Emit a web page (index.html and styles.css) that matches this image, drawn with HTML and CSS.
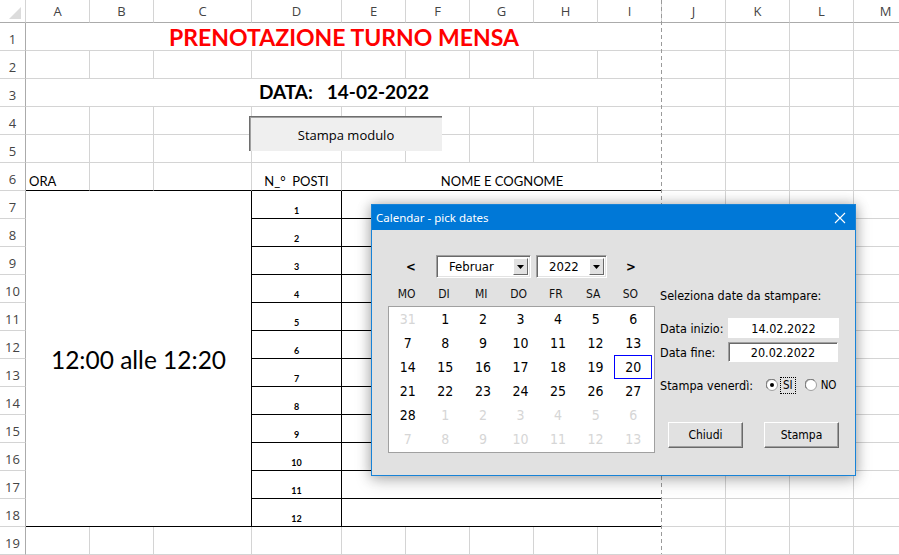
FILE: index.html
```html
<!DOCTYPE html>
<html lang="it">
<head>
<meta charset="utf-8">
<title>Prenotazione turno mensa</title>
<link rel="stylesheet" href="styles.css">
</head>
<body>
<div class="sheet">
  <div class="corner"><svg width="12" height="12" viewBox="0 0 12 12"><polygon points="12,0 12,12 0,12" fill="#dcdcdc"/></svg></div>
  <div class="ch">A</div><div class="ch">B</div><div class="ch">C</div><div class="ch">D</div><div class="ch">E</div><div class="ch">F</div><div class="ch">G</div><div class="ch">H</div><div class="ch">I</div><div class="ch">J</div><div class="ch">K</div><div class="ch">L</div><div class="ch">M</div>

  <div class="rh">1</div><div class="cell title">PRENOTAZIONE TURNO MENSA</div>
  <div class="rh">2</div>
  <div class="rh">3</div><div class="cell date">DATA:   14-02-2022</div>
  <div class="rh">4</div>
  <div class="rh">5</div>
  <div class="rh">6</div><div class="cell hd col-a">ORA</div><div class="cell hd col-b"></div><div class="cell hd col-c"></div><div class="cell hd col-d">N_°  POSTI</div><div class="cell hd col-e">NOME E COGNOME</div>
  <div class="rh">7</div><div class="cell ora">12:00 alle 12:20</div><div class="cell seat">1</div><div class="cell name"></div>
  <div class="rh">8</div><div class="cell seat">2</div><div class="cell name"></div>
  <div class="rh">9</div><div class="cell seat">3</div><div class="cell name"></div>
  <div class="rh">10</div><div class="cell seat">4</div><div class="cell name"></div>
  <div class="rh">11</div><div class="cell seat">5</div><div class="cell name"></div>
  <div class="rh">12</div><div class="cell seat">6</div><div class="cell name"></div>
  <div class="rh">13</div><div class="cell seat">7</div><div class="cell name"></div>
  <div class="rh">14</div><div class="cell seat">8</div><div class="cell name"></div>
  <div class="rh">15</div><div class="cell seat">9</div><div class="cell name"></div>
  <div class="rh">16</div><div class="cell seat">10</div><div class="cell name"></div>
  <div class="rh">17</div><div class="cell seat">11</div><div class="cell name"></div>
  <div class="rh">18</div><div class="cell seat">12</div><div class="cell name"></div>
  <div class="rh">19</div>

  <div class="pagebreak"></div>
  <div class="sheet-btn">Stampa modulo</div>
</div>

<div class="dialog">
  <div class="titlebar">
    <span class="title-text">Calendar - pick dates</span>
    <span class="close"><svg width="12" height="12" viewBox="0 0 12 12"><path d="M1 1L11 11M11 1L1 11" stroke="#fff" stroke-width="1.1" fill="none"/></svg></span>
  </div>
  <div class="dlg-body">
    <div class="cal">
      <div class="nav">
        <span class="arrow prev">&lt;</span>
        <div class="combo month"><span class="combo-val">Februar</span><span class="drop"><svg width="7" height="4" viewBox="0 0 7 4"><polygon points="0,0 7,0 3.5,4" fill="#000"/></svg></span></div>
        <div class="combo year"><span class="combo-val">2022</span><span class="drop"><svg width="7" height="4" viewBox="0 0 7 4"><polygon points="0,0 7,0 3.5,4" fill="#000"/></svg></span></div>
        <span class="arrow next">&gt;</span>
      </div>
      <div class="dow"><span>MO</span><span>DI</span><span>MI</span><span>DO</span><span>FR</span><span>SA</span><span>SO</span></div>
      <div class="days">
        <span class="off">31</span><span>1</span><span>2</span><span>3</span><span>4</span><span>5</span><span>6</span>
        <span>7</span><span>8</span><span>9</span><span>10</span><span>11</span><span>12</span><span>13</span>
        <span>14</span><span>15</span><span>16</span><span>17</span><span>18</span><span>19</span><span class="sel">20</span>
        <span>21</span><span>22</span><span>23</span><span>24</span><span>25</span><span>26</span><span>27</span>
        <span>28</span><span class="off">1</span><span class="off">2</span><span class="off">3</span><span class="off">4</span><span class="off">5</span><span class="off">6</span>
        <span class="off">7</span><span class="off">8</span><span class="off">9</span><span class="off">10</span><span class="off">11</span><span class="off">12</span><span class="off">13</span>
      </div>
    </div>
    <div class="form">
      <div class="lead">Seleziona date da stampare:</div>
      <div class="field first"><span class="lbl">Data inizio:</span><span class="inp flat">14.02.2022</span></div>
      <div class="field"><span class="lbl">Data fine:</span><span class="inp sunken">20.02.2022</span></div>
      <div class="radio-row">
        <span class="rlbl">Stampa venerdì:</span>
        <svg class="radio" width="12" height="12" viewBox="0 0 12 12"><circle cx="6" cy="6" r="5.5" fill="#fff" stroke="#a0a0a0"/><path d="M1.6 9.4A5.5 5.5 0 0 1 9.4 1.6" stroke="#696969" fill="none"/><circle cx="6" cy="6" r="2" fill="#000"/></svg>
        <span class="opt focus">SI</span>
        <svg class="radio r2" width="12" height="12" viewBox="0 0 12 12"><circle cx="6" cy="6" r="5.5" fill="#fff" stroke="#a0a0a0"/><path d="M1.6 9.4A5.5 5.5 0 0 1 9.4 1.6" stroke="#696969" fill="none"/></svg>
        <span class="opt">NO</span>
      </div>
      <div class="buttons"><span class="btn">Chiudi</span><span class="btn">Stampa</span></div>
    </div>
  </div>
</div>
</body>
</html>
```
FILE: styles.css
```css
html, body {
  margin: 0;
  padding: 0;
  background: #fff;
}
body {
  position: relative;
  width: 899px;
  height: 555px;
  overflow: hidden;
  font-family: "Lato", "Open Sans", sans-serif;
  color: #000;
}
.sheet {
  position: relative;
  display: grid;
  grid-template-columns: 26px 64px 64px 98px 90px repeat(9, 64px);
  grid-template-rows: 23px repeat(19, 28px);
  width: 918px;
  background-color: #fff;
  background-image:
    repeating-linear-gradient(to bottom, transparent 0 27px, #d4d4d4 27px 28px),
    linear-gradient(#d4d4d4, #d4d4d4),
    linear-gradient(#d4d4d4, #d4d4d4),
    linear-gradient(#d4d4d4, #d4d4d4),
    linear-gradient(#d4d4d4, #d4d4d4),
    linear-gradient(#d4d4d4, #d4d4d4),
    linear-gradient(#d4d4d4, #d4d4d4),
    linear-gradient(#d4d4d4, #d4d4d4),
    linear-gradient(#d4d4d4, #d4d4d4),
    linear-gradient(#d4d4d4, #d4d4d4),
    linear-gradient(#d4d4d4, #d4d4d4),
    linear-gradient(#d4d4d4, #d4d4d4);
  background-size: 100% 100%, 1px 100%, 1px 100%, 1px 100%, 1px 100%, 1px 100%, 1px 100%, 1px 100%, 1px 100%, 1px 100%, 1px 100%, 1px 100%;
  background-position: 0 23px, 89px 0, 153px 0, 251px 0, 341px 0, 405px 0, 469px 0, 533px 0, 597px 0, 725px 0, 789px 0, 853px 0;
  background-repeat: no-repeat;
}
.sheet > div {
  box-sizing: border-box;
}
.corner {
  background: #fff;
  border-right: 1px solid #d4d4d4;
  border-bottom: 1px solid #ababab;
  display: flex;
  justify-content: flex-end;
  align-items: flex-end;
  padding: 0 4px 3px 0;
}
.corner svg { display: block; }
.ch {
  background: #fff;
  border-right: 1px solid #d4d4d4;
  border-bottom: 1px solid #ababab;
  font-family: "Open Sans", "Noto Sans", sans-serif;
  font-size: 13px;
  color: #444;
  display: flex;
  align-items: center;
  justify-content: center;
  line-height: 1;
}
.rh {
  grid-column: 1;
  background: #fff;
  border-right: 1px solid #ababab;
  border-bottom: 1px solid #d4d4d4;
  font-family: "Open Sans", "Noto Sans", sans-serif;
  font-size: 13px;
  color: #444;
  display: flex;
  align-items: flex-end;
  justify-content: center;
  padding-bottom: 3px;
  line-height: 16px;
}
.cell {
  background: #fff;
  display: flex;
  white-space: pre;
}
.title {
  grid-column: 2 / 11;
  border-bottom: 1px solid #d4d4d4;
  align-items: center;
  justify-content: center;
  color: #ff0000;
  font-weight: 700;
  font-size: 23px;
  padding-top: 1px;
}
.date {
  grid-column: 2 / 11;
  border-bottom: 1px solid #d4d4d4;
  align-items: center;
  justify-content: center;
  font-weight: 700;
  font-size: 19px;
  padding-bottom: 2px;
}
.hd {
  border-bottom: 1px solid #000;
  border-right: 1px solid #d4d4d4;
  align-items: flex-end;
  font-size: 13px;
  line-height: 16px;
  padding-bottom: 1px;
}
.col-a { grid-column: 2; padding-left: 3px; }
.col-b { grid-column: 3; }
.col-c { grid-column: 4; }
.col-d { grid-column: 5; justify-content: center; }
.col-e { grid-column: 6 / 11; justify-content: center; border-right: none; }
.ora {
  grid-column: 2 / 5;
  grid-row: span 12;
  border-right: 1px solid #000;
  border-bottom: 1px solid #000;
  align-items: center;
  justify-content: center;
  font-size: 24.5px;
  padding-top: 1px;
}
.seat {
  grid-column: 5;
  border-right: 1px solid #000;
  border-bottom: 1px solid #000;
  align-items: flex-end;
  justify-content: center;
  font-size: 9px;
  font-weight: 700;
  line-height: 10px;
  padding-bottom: 2px;
}
.name {
  grid-column: 6 / 11;
  border-bottom: 1px solid #000;
}
.pagebreak {
  position: absolute;
  left: 661px;
  top: 0;
  width: 1px;
  height: 554px;
  background: repeating-linear-gradient(to bottom, #9a9a9a 0 4px, transparent 4px 7px);
}
.sheet-btn {
  position: absolute;
  left: 249px;
  top: 116px;
  width: 193px;
  height: 35px;
  box-sizing: border-box;
  background: #efefef;
  border-top: 1px solid #6e6e6e;
  border-left: 1px solid #6e6e6e;
  box-shadow: inset 1px 1px 0 #a0a0a0;
  font-family: "Open Sans", "Noto Sans", sans-serif;
  font-size: 13px;
  display: flex;
  align-items: center;
  justify-content: center;
  padding-top: 2px;
}

/* dialog */
.dialog {
  position: absolute;
  left: 371px;
  top: 204px;
  width: 485px;
  height: 272px;
  box-sizing: border-box;
  border: 1px solid #1883d7;
  background: #e1e1e1;
  box-shadow: 0 0 12px rgba(0, 0, 0, 0.28), 0 5px 16px rgba(0, 0, 0, 0.18);
  font-family: "DejaVu Sans Condensed", "DejaVu Sans", sans-serif;
}
.titlebar {
  height: 25px;
  background: #0078d7;
  display: flex;
  align-items: center;
  justify-content: space-between;
  padding-left: 4px;
  color: #fff;
  font-family: "Noto Sans", "Open Sans", sans-serif;
  font-size: 11.5px;
}
.close {
  width: 30px;
  display: flex;
  justify-content: center;
}
.close svg { display: block; }
.dlg-body {
  display: flex;
  padding: 25px 0 0 16px;
}
.cal {
  width: 267px;
}
.nav {
  display: flex;
  align-items: center;
  height: 23px;
}
.arrow {
  font-weight: 700;
  font-size: 13px;
  text-align: center;
}
.prev { width: 46px; }
.next { flex: 1; }
.combo {
  box-sizing: border-box;
  height: 23px;
  display: flex;
  align-items: stretch;
  background: #fff;
  border-top: 1px solid #a0a0a0;
  border-left: 1px solid #a0a0a0;
  border-right: 1px solid #fff;
  border-bottom: 1px solid #fff;
  box-shadow: inset 1px 1px 0 #696969, inset -1px -1px 0 #e3e3e3;
  padding: 2px;
  font-size: 13px;
}
.month { width: 95px; margin-left: 2px; }
.year { width: 71px; margin-left: 5px; }
.combo-val {
  flex: 1;
  display: flex;
  align-items: center;
  padding-left: 10px;
}
.drop {
  width: 15px;
  box-sizing: border-box;
  background: #e1e1e1;
  border-top: 1px solid #fff;
  border-left: 1px solid #fff;
  border-right: 1px solid #696969;
  border-bottom: 1px solid #696969;
  display: flex;
  align-items: center;
  justify-content: center;
}
.drop svg { display: block; }
.dow {
  display: grid;
  grid-template-columns: repeat(7, 37.3px);
  height: 18px;
  margin-top: 7px;
  align-items: center;
  font-size: 12px;
  color: #111;
}
.dow span { text-align: center; }
.days {
  box-sizing: border-box;
  width: 267px;
  margin-top: 3px;
  border: 1px solid #a0a0a0;
  background: #fff;
  padding: 0 2px 1px 0;
  display: grid;
  grid-template-columns: repeat(7, 1fr);
  grid-auto-rows: 24px;
  font-size: 14px;
}
.days span {
  display: flex;
  align-items: center;
  justify-content: center;
  box-sizing: border-box;
}
.days .off { color: #d6d6d6; }
.days .sel { border: 1px solid #0000ff; }
.form {
  margin-left: 5px;
  padding-top: 33px;
  display: flex;
  flex-direction: column;
  font-size: 12.5px;
}
.lead { line-height: 15px; }
.field {
  display: flex;
  align-items: center;
  height: 20px;
  margin-top: 4px;
}
.field.first { margin-top: 15px; }
.lbl { width: 68px; }
.inp {
  box-sizing: border-box;
  width: 111px;
  height: 20px;
  background: #fff;
  display: flex;
  align-items: center;
  justify-content: center;
  font-size: 12.5px;
}
.sunken {
  width: 110px;
  border-top: 1px solid #a0a0a0;
  border-left: 1px solid #a0a0a0;
  border-right: 1px solid #fff;
  border-bottom: 1px solid #fff;
  box-shadow: inset 1px 1px 0 #696969;
}
.radio-row {
  display: flex;
  align-items: center;
  height: 16px;
  margin-top: 15px;
}
.rlbl { width: 106px; }
.radio { display: block; }
.r2 { margin-left: 10px; }
.opt {
  font-size: 11.5px;
  margin-left: 4px;
  line-height: 13px;
}
.focus {
  outline: 1px dotted #000;
  outline-offset: 0;
  padding: 1px 2px;
  margin-left: 3px;
}
.buttons {
  display: flex;
  margin-top: 29px;
  padding-left: 8px;
  gap: 21px;
}
.btn {
  box-sizing: border-box;
  width: 75px;
  height: 26px;
  background: #e1e1e1;
  border-top: 1px solid #fff;
  border-left: 1px solid #fff;
  border-right: 1px solid #696969;
  border-bottom: 1px solid #696969;
  box-shadow: inset -1px -1px 0 #a0a0a0;
  display: flex;
  align-items: center;
  justify-content: center;
  font-size: 12px;
}
```
